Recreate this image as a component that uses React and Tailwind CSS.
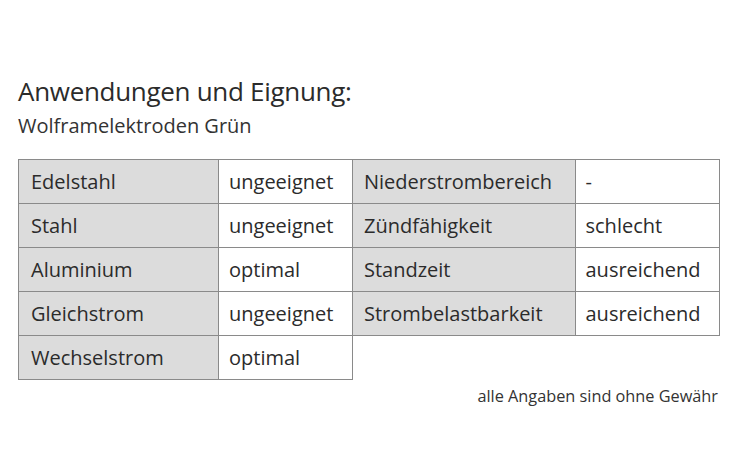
import React from 'react';

const left = [
  ['Edelstahl', 'ungeeignet'],
  ['Stahl', 'ungeeignet'],
  ['Aluminium', 'optimal'],
  ['Gleichstrom', 'ungeeignet'],
  ['Wechselstrom', 'optimal'],
];

const right = [
  ['Niederstrombereich', '-'],
  ['Zündfähigkeit', 'schlecht'],
  ['Standzeit', 'ausreichend'],
  ['Strombelastbarkeit', 'ausreichend'],
];

const App = () => {
  return (
    <div
      className="w-[736px] h-[460px] bg-white text-[#2b2b2b] pt-[76px] pl-[18px]"
      style={{ fontFamily: '"Open Sans", "DejaVu Sans", sans-serif' }}
    >
      <h1 className="text-[26px] leading-[30px] tracking-[-0.3px]">Anwendungen und Eignung:</h1>
      <p className="text-[20px] leading-[26px] mt-[7px] text-[#333]">Wolframelektroden Grün</p>

      <div className="flex items-start mt-[20px]">
        <table className="border-collapse text-[20px]">
          <tbody>
            {left.map(([k, v]) => (
              <tr key={k} className="h-[44px]">
                <td className="w-[200px] border border-[#8a8a8a] bg-[#dcdcdc] pl-[12px] p-0">{k}</td>
                <td className="w-[134px] border border-[#8a8a8a] bg-white pl-[10px] p-0">{v}</td>
              </tr>
            ))}
          </tbody>
        </table>
        <table className="border-collapse text-[20px]">
          <tbody>
            {right.map(([k, v]) => (
              <tr key={k} className="h-[44px]">
                <td className="w-[222px] border border-l-0 border-[#8a8a8a] bg-[#dcdcdc] pl-[11px] p-0">{k}</td>
                <td className="w-[144px] border border-[#8a8a8a] bg-white pl-[10px] p-0">{v}</td>
              </tr>
            ))}
          </tbody>
        </table>
      </div>

      <p className="w-[700px] text-right text-[16.3px] leading-[22px] mt-[5px] text-[#333]">alle Angaben sind ohne Gewähr</p>
    </div>
  );
};

export default App;
